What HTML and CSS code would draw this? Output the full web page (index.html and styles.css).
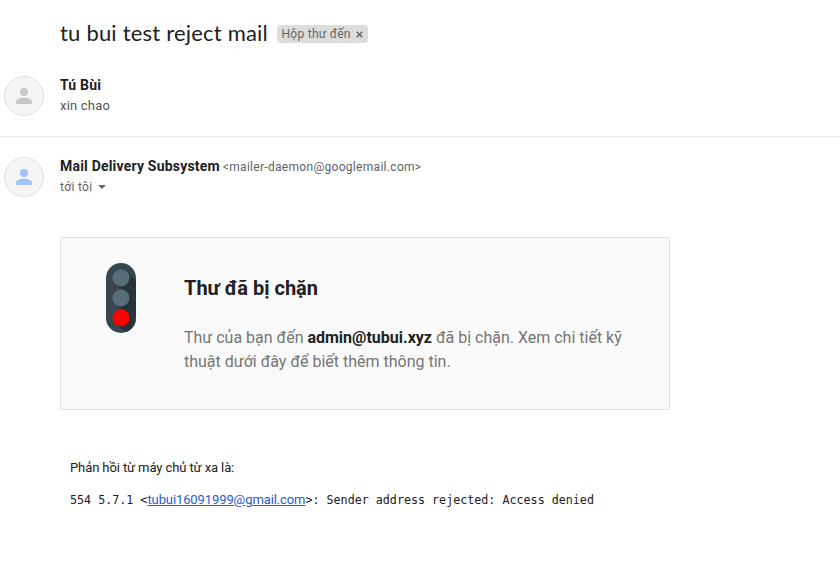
FILE: index.html
```html
<!DOCTYPE html>
<html lang="vi">
<head>
<meta charset="utf-8">
<title>tu bui test reject mail</title>
<link rel="stylesheet" href="styles.css">
</head>
<body>
<header class="subject"><h1>tu bui test reject mail</h1><span class="label"><span>Hộp thư đến</span><svg width="7" height="7" viewBox="0 0 7 7"><path d="M.7.7l5.600 5.600M6.300.7L.7 6.300" stroke="#666" stroke-width="1.500"/></svg></span></header>
<section class="message first">
<div class="avatar"><svg width="16" height="16" viewBox="0 0 16 16" fill="#c8c8c8"><circle cx="8" cy="4" r="4"/><path d="M0 16v-2.500C0 10.800 4.500 9.700 8 9.700s8 1.100 8 3.800V16z"/></svg></div>
<div><div class="sender"><b>Tú Bùi</b></div><div class="snippet">xin chao</div></div>
</section>
<section class="message second">
<div class="avatar"><svg width="16" height="16" viewBox="0 0 16 16" fill="#a1c2fa"><circle cx="8" cy="4" r="4"/><path d="M0 16v-2.500C0 10.800 4.500 9.700 8 9.700s8 1.100 8 3.800V16z"/></svg></div>
<div><div class="sender"><b>Mail Delivery Subsystem</b><span class="address">&lt;mailer-daemon@googlemail.com&gt;</span></div><div class="recipient"><span>tới tôi</span><i class="caret"></i></div></div>
</section>
<main class="notice">
<svg class="light" width="30" height="70" viewBox="0 0 30 70">
<defs><linearGradient id="shade" x1="0" y1="0" x2="1" y2="1"><stop offset="0" stop-color="#212b30"/><stop offset="1" stop-color="#263238" stop-opacity=".55"/></linearGradient><clipPath id="body"><rect width="30" height="70" rx="15"/></clipPath></defs>
<rect width="30" height="70" rx="15" fill="#37474f"/>
<g clip-path="url(#body)" fill="url(#shade)"><path d="M21 9l20 20v16L9 21z"/><path d="M21 29l20 20v16L9 41z"/><path d="M21 49l20 20v16L9 61z"/></g>
<circle cx="15" cy="15" r="8.500" fill="#546e7a"/><circle cx="15" cy="35" r="8.500" fill="#546e7a"/><circle cx="15" cy="55" r="8.500" fill="#f00"/></svg>
<div class="copy"><h2>Thư đã bị chặn</h2><p><span class="line">Thư của bạn đến <b>admin@tubui.xyz</b> đã bị chặn. Xem chi tiết kỹ</span><span class="line">thuật dưới đây để biết thêm thông tin.</span></p></div>
</main>
<section class="response"><p class="intro">Phản hồi từ máy chủ từ xa là:</p><p class="error">554 5.7.1 &lt;<a href="#">tubui16091999@gmail.com</a>&gt;: Sender address rejected: Access denied</p></section>
</body>
</html>
```
FILE: styles.css
```css
* { box-sizing: border-box; }
body { margin: 0; height: 579px; overflow: hidden; background: #fff; color: #202124; font-family: Roboto, sans-serif; }
h1, h2, p { margin: 0; }
.subject { display: flex; align-items: center; height: 68px; padding-left: 60px; gap: 9px; }
h1 { padding-bottom: 2px; font: 400 22px/28px Lato, sans-serif; letter-spacing: .2px; width: 208px; white-space: nowrap; }
.label { display: flex; align-items: center; justify-content: space-between; width: 91px; height: 18px; padding: 0 5px 0 4.500px; border-radius: 4px; background: #ddd; color: #666; font-size: 12px; letter-spacing: .27px; }
.message { display: flex; gap: 16px; padding-left: 4px; }
.first { height: 69px; padding-top: 8px; border-bottom: 1px solid #ebebeb; }
.second { height: 100px; padding-top: 20px; }
.avatar { display: flex; align-items: center; justify-content: center; width: 40px; height: 40px; border: 1px solid #e0e0e0; border-radius: 50%; background: #f5f5f5; }
.sender { display: flex; align-items: center; height: 20px; padding-bottom: 2px; font-size: 14px; letter-spacing: .2px; }
.snippet { font-size: 13px; line-height: 20px; color: #555; letter-spacing: .2px; }
.address, .recipient { font-size: 12px; color: #5f6368; letter-spacing: .3px; }
.address { margin: 2px 0 0 3px; }
.recipient { display: flex; align-items: center; gap: 6px; height: 20px; }
.caret { border: 4px solid transparent; border-bottom: 0; border-top-color: #666; }
.notice { display: flex; width: 610px; height: 173px; margin-left: 60px; padding: 25px 0 0 45px; border: 1px solid #e0e0e0; border-radius: 2px; background: #fafafa; }
.copy { margin-left: 48px; padding-top: 12px; }
h2 { font: 700 20px/26px Roboto, sans-serif; }
.copy p { margin-top: 25px; color: #757575; font-size: 16px; line-height: 24px; }
.copy b { color: #212121; }
.line { display: block; width: max-content; }
.response { padding: 48px 0 0 70px; }
.intro { font-size: 13px; line-height: 20px; letter-spacing: -.1px; }
.error { margin-top: 12px; font: 11.700px/20px "DejaVu Sans Mono", monospace; white-space: nowrap; }
.error a { color: #2a5bd0; font: 13px Roboto, sans-serif; letter-spacing: -.1px; }
```
